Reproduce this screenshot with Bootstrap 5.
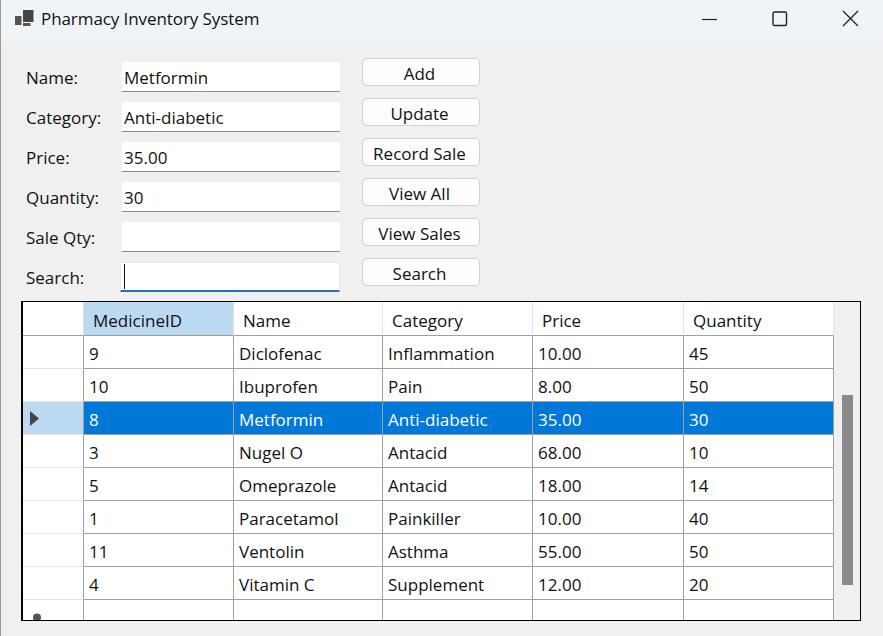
<!DOCTYPE html>
<html lang="en">
<head>
  <meta charset="UTF-8">
  <meta name="viewport" content="width=device-width, initial-scale=1">
  <title>Pharmacy Inventory System</title>
  <link href="https://cdn.jsdelivr.net/npm/bootstrap@5.3.2/dist/css/bootstrap.min.css" rel="stylesheet">
  <style>
    html, body { height: 100%; }
    body {
      background: #f0f0f0;
      font-family: "Open Sans", "Noto Sans", sans-serif;
      font-size: 17px;
      color: #111;
      overflow: hidden;
      border-left: 1px solid #9a9a9a;
    }
    .title-bar { height: 41px; padding-bottom: 4px; background: #eff4f8; }
    .title-bar span { letter-spacing: -0.08px; }
    .title-icon { margin-left: 13px; margin-right: 7px; }
    .win-box { margin-right: -3px; }
    .win-btn { width: 71px; height: 36px; }
    .form-area { height: 260px; padding-left: 25px; }
    .field-col { width: 314px; padding-top: 21px; }
    .field-row { height: 30px; margin-bottom: 10px; }
    .field-row label { width: 96px; padding-top: 2px; }
    .field-row .form-control {
      width: 218px; height: 30px; padding: 1px 2px 0; font: inherit; color: #111;
      background: #fff; border: 0; border-bottom: 1px solid #8c8c8c; border-radius: 0; box-shadow: none;
    }
    .field-row .form-control.active-field {
      width: 220px; margin-left: -1px; border: 1px solid #e6ebf0; border-bottom: 2px solid #1f73bd;
    }
    .caret-line { width: 1px; height: 25px; background: #111; left: 98px; top: 2px; }
    .btn-col { padding-top: 17px; margin-left: 22px; gap: 12px; }
    .btn-col .btn {
      width: 118px; height: 28px; padding: 2px 3px 0 0; font: inherit; color: #111; line-height: 1;
      background: #fdfdfd; border: 1px solid #d2d2d2; border-radius: 4px;
    }
    .grid-frame {
      height: 320px; margin: 0 22px 0 20px; overflow: hidden; background: #f0f0f0;
      border: 1px solid #000; border-left-width: 2px;
    }
    .grid-table { width: 811px; flex: none; table-layout: fixed; margin: 0; color: #111; border-collapse: separate; border-spacing: 0; }
    .grid-table th, .grid-table td {
      height: 33px; padding: 4px 0 0 5px; font-weight: 400; vertical-align: middle; background: #fff; color: #111; box-shadow: none;
      border: 0; border-right: 1px solid #a0a0a0; border-bottom: 1px solid #a0a0a0; white-space: nowrap;
    }
    .grid-table th { height: 34px; padding-left: 9px; border-right-color: #e2e2e2; }
    .grid-table th.sel-head, .grid-table .row-head.cur { background: #bbdaf2; }
    .grid-table .row-head { padding: 0; border-right-color: #a0a0a0; border-bottom-color: #e4e4e4; }
    .grid-table thead .row-head { border-bottom-color: #a0a0a0; border-right-color: #e2e2e2; }
    .grid-table tr.sel-row td:not(.row-head) { background: #0078d7; color: #fff; }
    .grid-table .row-head.new-row { vertical-align: top; }
    .cur-arrow { display: block; margin-left: 7px; }
    .new-mark { display: block; margin: 13px 0 0 10px; }
    .scroll-col { width: 26px; flex: none; padding: 93px 7px 0 8px; }
    .scroll-thumb { height: 190px; background: #8a8a8a; }
  </style>
</head>
<body>

  <!-- Title bar -->
  <div class="title-bar d-flex align-items-center">
    <svg class="title-icon" width="20" height="18" viewBox="0 0 20 18">
      <rect x="9" y="0" width="10.5" height="12" fill="#444"/>
      <rect x="1" y="6" width="6.5" height="9" fill="#555"/>
      <rect x="9" y="13" width="7.5" height="3" fill="#555"/>
    </svg>
    <span>Pharmacy Inventory System</span>
    <div class="win-box ms-auto d-flex">
      <div class="win-btn d-flex align-items-center justify-content-center">
        <svg width="16" height="16" viewBox="0 0 16 16"><path d="M1 8.5h15" stroke="#222" stroke-width="1.2"/></svg>
      </div>
      <div class="win-btn d-flex align-items-center justify-content-center">
        <svg width="16" height="16" viewBox="0 0 16 16"><rect x="1" y="1" width="13.5" height="13.5" rx="1.5" fill="none" stroke="#222" stroke-width="1.4"/></svg>
      </div>
      <div class="win-btn d-flex align-items-center justify-content-center">
        <svg width="17" height="17" viewBox="0 0 17 17"><path d="M1 1l15 15M16 1L1 16" stroke="#222" stroke-width="1.3"/></svg>
      </div>
    </div>
  </div>

  <!-- Fields and buttons -->
  <div class="form-area d-flex">
    <div class="field-col">
      <div class="field-row d-flex align-items-center"><label>Name:</label><input class="form-control" type="text" value="Metformin"></div>
      <div class="field-row d-flex align-items-center"><label>Category:</label><input class="form-control" type="text" value="Anti-diabetic"></div>
      <div class="field-row d-flex align-items-center"><label>Price:</label><input class="form-control" type="text" value="35.00"></div>
      <div class="field-row d-flex align-items-center"><label>Quantity:</label><input class="form-control" type="text" value="30"></div>
      <div class="field-row d-flex align-items-center"><label>Sale Qty:</label><input class="form-control" type="text" value=""></div>
      <div class="field-row d-flex align-items-center position-relative"><label>Search:</label><input class="form-control active-field" type="text" value=""><span class="caret-line position-absolute"></span></div>
    </div>
    <div class="btn-col d-flex flex-column">
      <button class="btn" type="button">Add</button>
      <button class="btn" type="button">Update</button>
      <button class="btn" type="button">Record Sale</button>
      <button class="btn" type="button">View All</button>
      <button class="btn" type="button">View Sales</button>
      <button class="btn" type="button">Search</button>
    </div>
  </div>

  <!-- Data grid -->
  <div class="grid-frame d-flex">
    <table class="table grid-table">
      <colgroup>
        <col style="width:61px"><col style="width:150px"><col style="width:149px"><col style="width:150px"><col style="width:151px"><col style="width:150px">
      </colgroup>
      <thead>
        <tr><th class="row-head"></th><th class="sel-head">MedicineID</th><th>Name</th><th>Category</th><th>Price</th><th>Quantity</th></tr>
      </thead>
      <tbody id="grid-body"></tbody>
    </table>
    <div class="scroll-col"><div class="scroll-thumb"></div></div>
  </div>

  <script>
    const medicines = [
      [9, 'Diclofenac', 'Inflammation', '10.00', 45],
      [10, 'Ibuprofen', 'Pain', '8.00', 50],
      [8, 'Metformin', 'Anti-diabetic', '35.00', 30],
      [3, 'Nugel O', 'Antacid', '68.00', 10],
      [5, 'Omeprazole', 'Antacid', '18.00', 14],
      [1, 'Paracetamol', 'Painkiller', '10.00', 40],
      [11, 'Ventolin', 'Asthma', '55.00', 50],
      [4, 'Vitamin C', 'Supplement', '12.00', 20]
    ];
    const body = document.getElementById('grid-body');
    const arrow = '<svg class="cur-arrow" width="9" height="15" viewBox="0 0 9 15"><path d="M0 0l9 7.5-9 7.5z" fill="#444"/></svg>';
    medicines.forEach(m => {
      const tr = document.createElement('tr');
      if (m[0] === 8) tr.className = 'sel-row';
      tr.innerHTML = `<td class="row-head ${m[0] === 8 ? 'cur' : ''}">${m[0] === 8 ? arrow : ''}</td>` +
        m.map(v => `<td>${v}</td>`).join('');
      body.appendChild(tr);
    });
    // empty "new row" at the bottom, cut off by the frame
    const last = document.createElement('tr');
    last.innerHTML = '<td class="row-head new-row"><svg class="new-mark" width="8" height="9" viewBox="0 0 8 9"><circle cx="4" cy="4.5" r="4" fill="#555"/></svg></td><td></td><td></td><td></td><td></td><td></td>';
    body.appendChild(last);
  </script>
  <script src="https://cdn.jsdelivr.net/npm/bootstrap@5.3.2/dist/js/bootstrap.bundle.min.js"></script>
</body>
</html>
